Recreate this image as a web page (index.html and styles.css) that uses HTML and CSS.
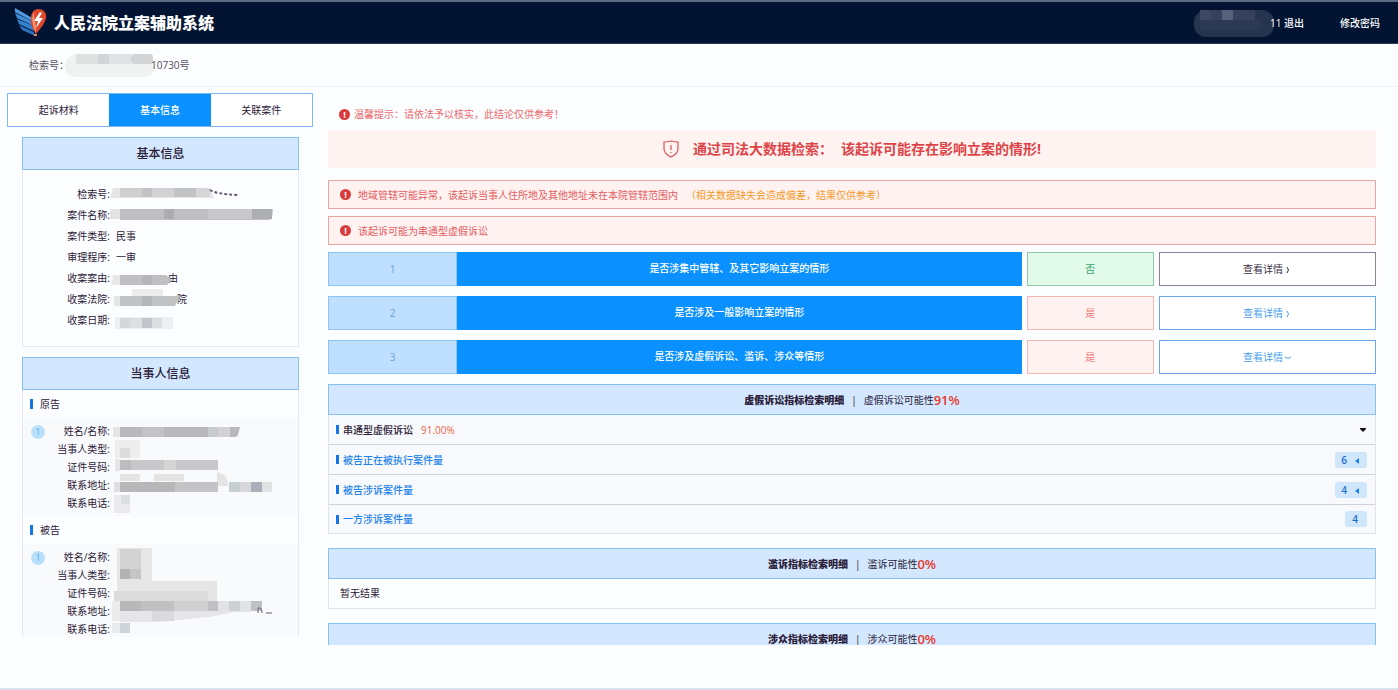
FILE: index.html
```html
<!DOCTYPE html>
<html lang="zh-CN">
<head>
<meta charset="utf-8">
<title>人民法院立案辅助系统</title>
<link rel="stylesheet" href="styles.css">
</head>
<body>
<header class="topbar">
  <svg class="logo" viewBox="0 0 34 30" aria-hidden="true">
    <path d="M1 0 20 11v3L1 4z" fill="#4f9be0"/>
    <path d="M1 5 20 14v4L3 10z" fill="#3f8bd6"/>
    <path d="M3 11 20 18v5L5 16z" fill="#3580cc"/>
    <path d="M5 17 20 24l1 4L8 22z" fill="#2b70bb"/>
    <path d="M24 1c5 0 9 3 8 9-1 5-5 10-10 16-3-5-6-10-5-16 0-5 3-9 7-9z" fill="#e0482c"/>
    <path d="M20 4c-3 5-2 14 2 20 1-5-2-12-2-20z" fill="#f2926a"/>
    <path d="M26 4 20 13h4l-2 7 7-10h-4l3-5z" fill="#fff"/>
    <path d="M20 26h3v2h-3z" fill="#d98a4e"/>
  </svg>
  <h1 class="brand">人民法院立案辅助系统</h1>
  <nav class="user-nav">
    <svg class="user-mask" viewBox="0 0 80 28" aria-hidden="true">
      <rect x="0" y="1" width="80" height="27" rx="12" fill="#27344f"/>
      <rect x="6" y="1" width="11" height="10" fill="#3c4862"/>
      <rect x="17" y="1" width="11" height="10" fill="#36425d"/>
      <rect x="28" y="1" width="11" height="10" fill="#56617a"/>
      <rect x="39" y="1" width="22" height="10" fill="#36425d"/>
      <rect x="6" y="11" width="60" height="10" fill="#2c3954"/>
    </svg>
    <a class="nav-link" href="#">11 退出</a>
    <a class="nav-link nav-password" href="#">修改密码</a>
  </nav>
</header>

<div class="case-bar">
  <span>检索号：</span>
  <svg class="case-mask" viewBox="0 0 90 24" aria-hidden="true">
    <rect x="0" y="2" width="90" height="22" rx="11" fill="#f0f1f1"/>
    <rect x="11" y="1" width="22" height="10" fill="#dfe1e1"/>
    <rect x="33" y="1" width="11" height="10" fill="#d2d5d7"/>
    <rect x="44" y="1" width="22" height="10" fill="#e1e2e3"/>
    <rect x="66" y="1" width="22" height="10" rx="3" fill="#d3d5d6"/>
  </svg>
  <span>10730号</span>
</div>

<div class="workspace">
  <aside class="side">
    <div class="tabs">
      <button class="tab" type="button">起诉材料</button>
      <button class="tab tab-active" type="button">基本信息</button>
      <button class="tab" type="button">关联案件</button>
    </div>
    <section class="card">
      <h2 class="card-title">基本信息</h2>
      <div class="card-body">
        <dl class="fields">
          <dt>检索号:</dt><dd></dd>
          <dt>案件名称:</dt><dd></dd>
          <dt>案件类型:</dt><dd>民事</dd>
          <dt>审理程序:</dt><dd>一审</dd>
          <dt>收案案由:</dt><dd class="tail-a">由</dd>
          <dt>收案法院:</dt><dd class="tail-b">院</dd>
          <dt>收案日期:</dt><dd></dd>
        </dl>
        <svg class="mask mask-basic" viewBox="110 185 170 150" aria-hidden="true">
          <path d="M113 188h97l4 10h-104z" fill="#e6e6e6"/>
          <path d="M120 188h22v9h-22z" fill="#cfcfd0"/><path d="M142 188h10v9h-10z" fill="#c3c3c5"/><path d="M152 188h22v9h-22z" fill="#d2d1d3"/><path d="M174 188h22v9h-22z" fill="#c1c3c5"/><path d="M196 188h14v9h-14z" fill="#d6d6d8"/>
          <path d="M210 190q6 4 28 5" stroke="#665c72" stroke-width="2" stroke-dasharray="3 2" fill="none"/>
          <path d="M110 209h10v10h-10z" fill="#e3e3e4"/><path d="M120 209h153l-1 9q-1 2-3 2H120z" fill="#bfbfc1"/><path d="M164 209h10v10h-10z" fill="#adadb0"/><path d="M208 209h44v10h-44z" fill="#c9c9cc"/><path d="M252 209h20v10h-20z" fill="#adaeb4"/>
          <path d="M113 275h7v10h-8z" fill="#e7e7e7"/><path d="M120 275h46l6 5-5 5h-47z" fill="#c0c0c2"/><path d="M142 275h10v10h-10z" fill="#b6b6b9"/>
          <path d="M132 289h31v7h-31z" fill="#ececed"/>
          <path d="M114 296h6v10h-6z" fill="#e5e6e6"/><path d="M120 296h60l-5 10h-55z" fill="#c1c2c3"/><path d="M142 296h10v10h-10z" fill="#b5b6b9"/>
          <path d="M115 317h58v12h-58z" fill="#eeeff0"/><path d="M120 318h10v10h-10z" fill="#d6d7d9"/><path d="M130 318h12v10h-12z" fill="#dedfe0"/><path d="M142 318h10v10h-10z" fill="#c4c5ca"/><path d="M152 318h10v10h-10z" fill="#dcdde0"/>
        </svg>
      </div>
    </section>

    <section class="card">
      <h2 class="card-title">当事人信息</h2>
      <h3 class="party-title">原告</h3>
      <div class="party">
        <span class="party-no">1</span>
        <dl class="fields fields-party">
          <dt>姓名/名称:</dt><dd></dd>
          <dt>当事人类型:</dt><dd></dd>
          <dt>证件号码:</dt><dd></dd>
          <dt>联系地址:</dt><dd></dd>
          <dt>联系电话:</dt><dd></dd>
        </dl>
        <svg class="mask mask-party" viewBox="110 420 170 95" aria-hidden="true">
          <path d="M113 428h7v10h-7z" fill="#e5e5e6"/><path d="M120 428h120l-2 8q-1 2-3 2H120z" fill="#b9b9bc"/><path d="M142 428h22v10h-22z" fill="#c3c3c5"/><path d="M208 428h10v10h-10z" fill="#c9cacc"/><path d="M218 428h12v10h-12z" fill="#d3d3d5"/>
          <path d="M115 441h25v18h-25z" fill="#ededee"/><path d="M120 449h10v10h-10z" fill="#dcdcdd"/>
          <path d="M115 460h5v12h-5z" fill="#e5e5e7"/><path d="M120 461h98v10h-98z" fill="#c8c8ca"/><path d="M120 461h11v10h-11z" fill="#bdbdc0"/><path d="M164 461h12v10h-12z" fill="#d5d5d6"/>
          <path d="M120 475h20v7h-20zM154 475h30v7h-30zM217 473q11 2 11 14h-11z" fill="#e4e4e5"/>
          <path d="M114 483h6v10h-6z" fill="#e0e0e2"/><path d="M120 483h55v10h-55z" fill="#b7b7ba"/><path d="M175 483h43v10h-43z" fill="#c4c4c7"/><path d="M229 483h11v10h-11z" fill="#c8cfd2"/><path d="M240 483h11v10h-11z" fill="#d8d8dc"/><path d="M251 483h11v10h-11z" fill="#acaeba"/><path d="M262 483h10v10h-10z" fill="#dfe3e4"/>
          <path d="M114 496h16v18h-16z" fill="#ebebed"/><path d="M121 496h9v9h-9z" fill="#dddfe1"/>
        </svg>
      </div>
      <h3 class="party-title">被告</h3>
      <div class="party">
        <span class="party-no">1</span>
        <dl class="fields fields-party">
          <dt>姓名/名称:</dt><dd></dd>
          <dt>当事人类型:</dt><dd></dd>
          <dt>证件号码:</dt><dd></dd>
          <dt>联系地址:</dt><dd></dd>
          <dt>联系电话:</dt><dd></dd>
        </dl>
        <svg class="mask mask-party" viewBox="110 546 170 95" aria-hidden="true">
          <path d="M117 549h35v33h-35z" fill="#e7e7e8"/><path d="M120 550h21v20h-21z" fill="#d2d2d3"/><path d="M120 570h10v10h-10z" fill="#b2b3b5"/><path d="M130 570h11v10h-11z" fill="#c5c5c8"/>
          <path d="M117 582h100v10h-100z" fill="#e6e6e7"/><path d="M114 592h94v10h-94z" fill="#dbdbdc"/><path d="M208 592h9v10h-9z" fill="#e6e6e7"/>
          <path d="M112 602h8v20h-8z" fill="#ebebec"/><path d="M120 602h21v10h-21z" fill="#b8b8bb"/><path d="M141 602h33v10h-33z" fill="#c1c1c4"/><path d="M174 602h34v10h-34z" fill="#d0d0d2"/><path d="M208 602h10v10h-10z" fill="#bfbfc4"/><path d="M218 602h33v11h-33z" fill="#e1e3e5"/><path d="M229 602h11v10h-11z" fill="#cdd1d4"/><path d="M251 602h11v10h-11z" fill="#bfc1c7"/>
          <path d="M120 612h120l-30 6-52 5h-38z" fill="#e6e6e8"/><path d="M152 612h22v10h-22z" fill="#dadadc"/>
          <path d="M258 614v-5q4-1 4 5M266 614h6" stroke="#685d70" fill="none"/>
          <path d="M112 624h18v10h-18z" fill="#e9eaec"/><path d="M120 624h10v10h-10z" fill="#ccd4da"/>
        </svg>
      </div>
    </section>
  </aside>

  <main class="main">
    <p class="tip"><i class="bang" aria-hidden="true">!</i>温馨提示：请依法予以核实，此结论仅供参考！</p>
    <div class="banner">
      <svg class="shield" viewBox="0 0 16 18" aria-hidden="true">
        <path d="M8 1q-3 1-7 1v7c0 4 3 6 7 8 4-2 7-4 7-8V2q-4 0-7-1z" fill="none" stroke="#d9555a" stroke-width="1.2"/>
        <path d="M8 5v5M8 12v1" stroke="#d9555a" stroke-width="1.2"/>
      </svg>
      <strong>通过司法大数据检索：<span class="finding">该起诉可能存在影响立案的情形!</span></strong>
    </div>
    <p class="alert"><i class="bang" aria-hidden="true">!</i><span>地域管辖可能异常，该起诉当事人住所地及其他地址未在本院管辖范围内</span><span class="note">（相关数据缺失会造成偏差，结果仅供参考）</span></p>
    <p class="alert"><i class="bang" aria-hidden="true">!</i><span>该起诉可能为串通型虚假诉讼</span></p>

    <div class="checks">
      <div class="check">
        <div class="check-no">1</div>
        <div class="check-name">是否涉集中管辖、及其它影响立案的情形</div>
        <div class="check-result result-no">否</div>
        <button class="check-more more-dark" type="button">查看详情<svg class="chev" viewBox="0 0 8 8" aria-hidden="true"><path d="M3 1q3 3 0 6"/></svg></button>
      </div>
      <div class="check">
        <div class="check-no">2</div>
        <div class="check-name">是否涉及一般影响立案的情形</div>
        <div class="check-result">是</div>
        <button class="check-more" type="button">查看详情<svg class="chev" viewBox="0 0 8 8" aria-hidden="true"><path d="M3 1q3 3 0 6"/></svg></button>
      </div>
      <div class="check">
        <div class="check-no">3</div>
        <div class="check-name">是否涉及虚假诉讼、滥诉、涉众等情形</div>
        <div class="check-result">是</div>
        <button class="check-more" type="button">查看详情<svg class="chev" viewBox="0 0 8 8" aria-hidden="true"><path d="M1 3q3 3 6 0"/></svg></button>
      </div>
    </div>

    <section class="panel">
      <h2 class="panel-title"><b>虚假诉讼指标检索明细</b><span class="bar">|</span>虚假诉讼可能性<em>91%</em></h2>
      <ul class="items">
        <li class="item"><span class="item-name item-dark">串通型虚假诉讼</span><span class="rate">91.00%</span><svg class="caret" viewBox="0 0 8 6" aria-hidden="true"><path d="M1 1h6v1L4 5 1 2z"/></svg></li>
        <li class="item"><span class="item-name">被告正在被执行案件量</span><button class="count" type="button">6<svg class="tri" viewBox="0 0 4 6" aria-hidden="true"><path d="M4 0v6L0 3z"/></svg></button></li>
        <li class="item"><span class="item-name">被告涉诉案件量</span><button class="count" type="button">4<svg class="tri" viewBox="0 0 4 6" aria-hidden="true"><path d="M4 0v6L0 3z"/></svg></button></li>
        <li class="item"><span class="item-name">一方涉诉案件量</span><button class="count" type="button">4</button></li>
      </ul>
    </section>
    <section class="panel">
      <h2 class="panel-title"><b>滥诉指标检索明细</b><span class="bar">|</span>滥诉可能性<em>0%</em></h2>
      <p class="empty">暂无结果</p>
    </section>
    <section class="panel">
      <h2 class="panel-title"><b>涉众指标检索明细</b><span class="bar">|</span>涉众可能性<em>0%</em></h2>
      <p class="empty">暂无结果</p>
    </section>
  </main>
</div>
</body>
</html>
```
FILE: styles.css
```css
* { box-sizing: border-box; }

body {
  display: flex;
  flex-direction: column;
  height: 100vh;
  margin: 0;
  overflow: hidden;
  border-bottom: 2px solid #d9e1ea;
  background: #fcfdff;
  color: #2b2038;
  font: 10px/20px "Open Sans", "Noto Sans CJK SC", sans-serif;
}

h1, h2, h3, p, ul, dl, dd { margin: 0; padding: 0; }
ul { list-style: none; }
button { font: inherit; color: inherit; padding: 0; cursor: pointer; }

.topbar {
  flex: none;
  display: flex;
  align-items: center;
  height: 44px;
  padding: 0 18px 0 14px;
  border-top: 2px solid #5d6b82;
  border-bottom: 1px solid #2c3a57;
  background: #031433;
  color: #fff;
}
.logo { width: 34px; height: 30px; margin-right: 6px; }
.brand { font-size: 16px; line-height: 24px; font-weight: 900; }
.user-nav { display: flex; align-items: center; margin-left: auto; }
.user-mask { width: 80px; height: 28px; margin-right: -4px; }
.nav-link { color: #fff; text-decoration: none; font-weight: 500; }
.nav-password { margin-left: 36px; }

.case-bar {
  flex: none;
  display: flex;
  align-items: center;
  height: 43px;
  padding-left: 29px;
  border-bottom: 1px solid #eff1f5;
  color: #55505f;
}
.case-mask { width: 90px; height: 24px; margin: 0 -4px; }

.workspace {
  flex: 1;
  min-height: 0;
  display: flex;
  gap: 15px;
  padding: 6px 22px 43px 7px;
}

.side {
  flex: none;
  width: 306px;
  margin-bottom: 8px;
  overflow: hidden;
}
.tabs { display: flex; height: 34px; border: 1px solid #7db7f0; margin-bottom: 10px; }
.tab { flex: 1; border: 0; background: #fff; }
.tab-active { background: #0a91ff; color: #fff; font-weight: 500; }

.card {
  margin: 0 14px 10px 15px;
  border: 1px solid #e6eaf0;
  border-top: 0;
}
.card-title {
  height: 33px;
  margin: 0 -1px;
  border: 1px solid #84c0f0;
  background: #d3e8ff;
  font-size: 12px;
  line-height: 31px;
  font-weight: 500;
  text-align: center;
}
.card-body { position: relative; padding: 14px 0 15px; }
.fields {
  display: grid;
  grid-template-columns: 87px 1fr;
  column-gap: 6px;
  line-height: 21px;
}
.fields dt { text-align: right; }
.fields-party { line-height: 18px; grid-auto-rows: 18px; }
.tail-a { padding-left: 52px; }
.tail-b { padding-left: 61px; }

.mask { position: absolute; left: 87px; width: 170px; }
.mask-basic { top: 15px; height: 150px; }
.mask-party { top: 1px; height: 95px; }

.party-title {
  display: flex;
  align-items: center;
  height: 28px;
  padding-left: 7px;
  font-size: 10px;
  font-weight: 400;
}
.party-title::before {
  content: "";
  width: 3px;
  height: 10px;
  margin-right: 7px;
  background: #1474e8;
}
.party { position: relative; padding: 4px 0; background: #f9fafc; }
.party-no {
  position: absolute;
  top: 7px;
  left: 8px;
  width: 14px;
  height: 14px;
  border-radius: 50%;
  background: #b9e0fb;
  color: #5eaef0;
  font-size: 9px;
  line-height: 14px;
  text-align: center;
}

.main { flex: 1; min-width: 0; overflow: hidden; }
.bang {
  flex: none;
  width: 11px;
  height: 11px;
  border-radius: 50%;
  background: #d93a3c;
  color: #fff;
  font: 700 9px/11px "Open Sans", sans-serif;
  text-align: center;
}
.tip {
  display: flex;
  align-items: center;
  gap: 4px;
  height: 37px;
  padding: 5px 11px 0;
  color: #e86a6c;
}
.banner {
  display: flex;
  align-items: center;
  justify-content: center;
  gap: 14px;
  height: 38px;
  margin-bottom: 12px;
  background: #fff3f1;
  color: #dd4448;
  font-size: 14px;
}
.banner strong { font-weight: 700; }
.finding { margin-left: 8px; }
.shield { width: 16px; height: 18px; }
.alert {
  display: flex;
  align-items: center;
  height: 29px;
  margin-bottom: 7px;
  padding-left: 11px;
  border: 1px solid #eaa5a2;
  background: #fff2f0;
  color: #e45c5f;
}
.alert .bang { margin-right: 7px; }
.note { margin-left: 8px; color: #f59a2c; }

.checks { display: grid; gap: 10px; margin-bottom: 10px; }
.check {
  display: grid;
  grid-template-columns: 129fr 564fr 132fr 222fr;
  height: 34px;
  line-height: 32px;
  text-align: center;
}
.check-no { border: 1px solid #8fc4f3; background: #bfdfff; color: #6aa4d8; }
.check-name { background: #0a91ff; color: #fff; font-weight: 500; line-height: 33px; }
.check-result {
  margin-left: 5px;
  border: 1px solid #f2b8b4;
  background: #fff2f0;
  color: #ee7876;
}
.result-no { border-color: #8ccba6; background: #e2fae9; color: #39a56a; }
.check-more {
  margin-left: 5px;
  border: 1px solid #6ba8ea;
  background: #fff;
  color: #4a9ff0;
}
.more-dark { border-color: #8a8298; color: #3c3048; }
.chev {
  width: 8px;
  height: 8px;
  margin-left: 1px;
  vertical-align: middle;
  fill: none;
  stroke: currentColor;
}

.panel { margin-bottom: 14px; }
.panel-title {
  display: flex;
  align-items: center;
  justify-content: center;
  height: 31px;
  border: 1px solid #84c0f0;
  background: #d3e8ff;
  font-size: 10px;
  font-weight: 400;
  line-height: 20px;
}
.panel-title b { font-weight: 900; }
.panel-title em { color: #e8392b; font-size: 13px; font-style: normal; font-weight: 600; }
.bar { margin: 0 7px; }
.items { border: 1px solid #dfe2e7; border-top: 0; background: #f8f9fc; }
.item {
  display: flex;
  align-items: center;
  height: 30px;
  padding: 0 8px 0 7px;
  border-bottom: 1px solid #cfd3d8;
}
.item:last-child { height: 28px; border-bottom: 0; }
.item::before {
  content: "";
  width: 3px;
  height: 9px;
  margin-right: 4px;
  background: #1474e8;
}
.item-name { color: #1c83ea; font-weight: 500; }
.item-dark { color: #2b2038; }
.rate { margin-left: 8px; color: #ee6545; }
.caret { width: 8px; height: 6px; margin-left: auto; fill: #14101c; }
.count {
  margin-left: auto;
  min-width: 22px;
  height: 16px;
  padding: 0 8px 0 6px;
  border: 0;
  border-radius: 3px;
  background: #cfe6fb;
  color: #1c6fd0;
  font-weight: 600;
  line-height: 16px;
}
.tri { width: 4px; height: 6px; margin-left: 8px; fill: #1c83ea; }
.empty {
  height: 30px;
  padding-left: 11px;
  border: 1px solid #dfe5eb;
  border-top: 0;
  line-height: 28px;
}
```
